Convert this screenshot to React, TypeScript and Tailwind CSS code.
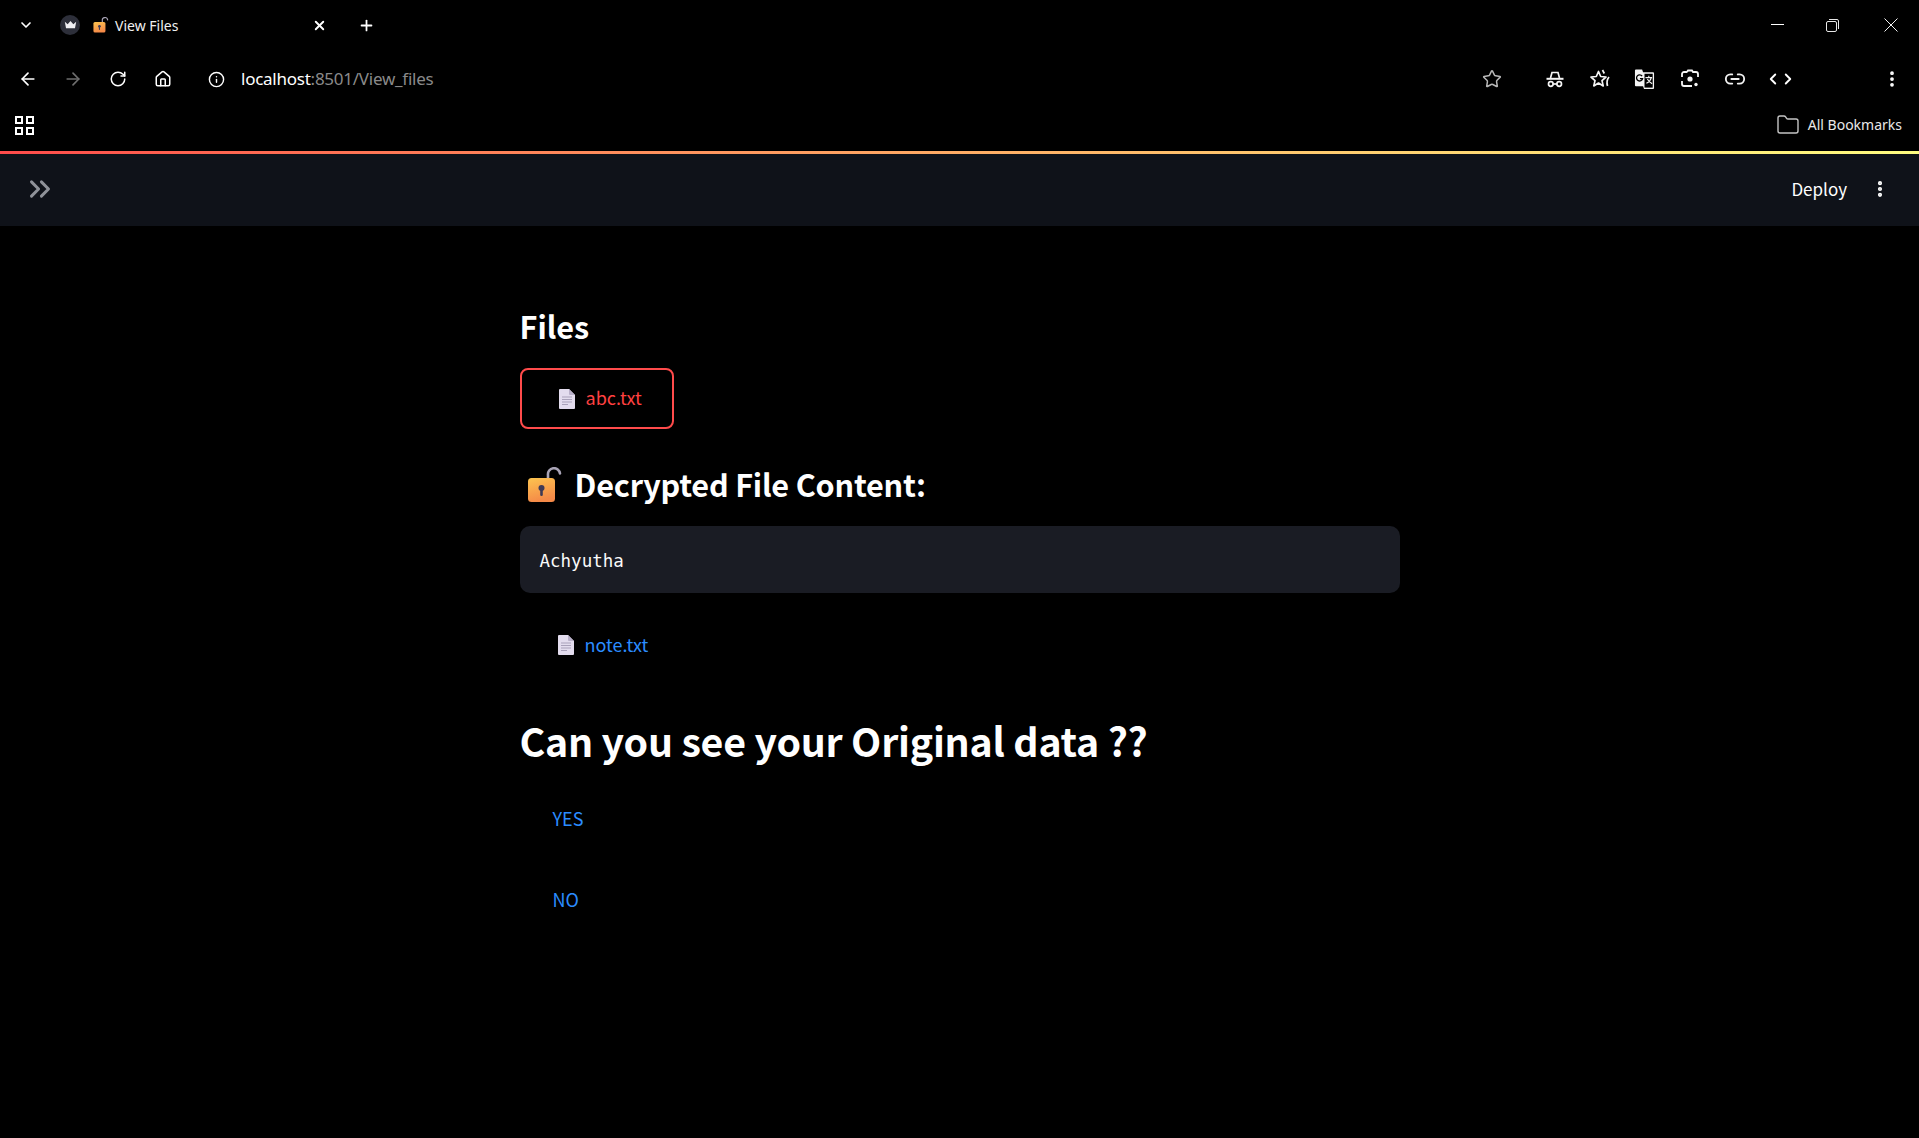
import {
  ArrowLeft,
  ArrowRight,
  ChevronDown,
  ChevronLeft,
  ChevronRight,
  ChevronsRight,
  EllipsisVertical,
  Folder,
  Home,
  Info,
  Link2,
  Plus,
  RotateCw,
  Star,
  X,
} from "lucide-react";
import type { ReactNode } from "react";

function LockEmoji({ className, id }: { className: string; id: string }) {
  return (
    <svg viewBox="0 0 36 36" className={className}>
      <defs>
        <linearGradient id={id} x1="0" y1="0" x2="0.3" y2="1">
          <stop offset="0" stopColor="#fcc44f" />
          <stop offset="1" stopColor="#f58a48" />
        </linearGradient>
      </defs>
      <path d="M21 12V8a6 6 0 0 1 12-1.500" fill="none" stroke="#a8a3b5" strokeWidth="2.600" strokeLinecap="round" />
      <rect x="1" y="11" width="27" height="24" rx="3.500" fill={`url(#${id})`} />
      <circle cx="14.500" cy="21" r="3" fill="#3f3a55" />
      <rect x="13.200" y="21" width="2.600" height="8" rx="1.200" fill="#3f3a55" />
    </svg>
  );
}

function DocEmoji() {
  return (
    <svg viewBox="0 0 16 20" className="w-[16px] h-[20px] shrink-0">
      <path d="M0 1a1 1 0 0 1 1-1h9l6 6v13a1 1 0 0 1-1 1H1a1 1 0 0 1-1-1z" fill="#e3dcee" />
      <path d="M10 0l6 6h-5a1 1 0 0 1-1-1z" fill="#b9b0c9" />
      <path d="M3 8h10M3 10.5h10M3 13h10M3 15.5h6" stroke="#a9a1ba" strokeWidth="1" />
    </svg>
  );
}

function Crown() {
  return (
    <div className="w-[20px] h-[20px] rounded-full bg-[#2d2f3a] flex items-center justify-center">
      <svg viewBox="0 0 16 12" className="w-[13px] h-[10px]">
        <path d="M1 2l3.5 3L8 1l3.5 4L15 2l-1.5 8h-11z" fill="#f0f0f4" />
      </svg>
    </div>
  );
}

function Slot({ children, className = "w-[45px]" }: { children: ReactNode; className?: string }) {
  return <div className={`${className} flex items-center justify-center shrink-0`}>{children}</div>;
}

function IncognitoIcon() {
  return (
    <svg viewBox="0 0 20 20" className="w-[20px] h-[20px]" fill="none" stroke="#f5f5f5" strokeWidth="1.700">
      <path d="M5.500 9L7 3.500h6L14.500 9" />
      <path d="M1.500 9.800h17" strokeWidth="2" />
      <circle cx="5.800" cy="15" r="2.300" />
      <circle cx="14.200" cy="15" r="2.300" />
      <path d="M8.100 15h3.800" />
    </svg>
  );
}

function SparkStarIcon() {
  return (
    <svg viewBox="0 0 22 20" className="w-[22px] h-[20px]" fill="none" stroke="#f5f5f5" strokeWidth="1.700" strokeLinejoin="round">
      <path d="M9.500 2.500l2.200 5 5.300.5-4 3.600 1.200 5.300-4.700-2.800-4.700 2.800 1.200-5.300-4-3.600 5.300-.5z" />
      <path d="M13.500 1l1.800 3.500M20 8c-2 2.500-2.500 5.500-1.500 9" />
    </svg>
  );
}

function TranslateIcon() {
  return (
    <svg viewBox="0 0 22 22" className="w-[21px] h-[21px]">
      <path d="M1 1.500a1 1 0 0 1 1-1h6.500l1 3H20a1 1 0 0 1 1 1v15.500a1 1 0 0 1-1 1H10.500l-1-3H2a1 1 0 0 1-1-1z" fill="#f5f5f5" />
      <rect x="11" y="5" width="8.600" height="14.500" fill="#000" />
      <path d="M8.500 7.500a3.200 3.200 0 1 0 .5 2.500H6.200" fill="none" stroke="#000" strokeWidth="1.400" />
      <path d="M12 9h7M15.500 7v2M13 15c3-1.500 4.500-3.500 5-6M14 10.500c1 2 2.500 3.500 5 5" stroke="#f5f5f5" strokeWidth="1.200" fill="none" />
    </svg>
  );
}

function LensIcon() {
  return (
    <svg viewBox="0 0 20 20" className="w-[20px] h-[20px]" fill="none" stroke="#f5f5f5" strokeWidth="1.800">
      <path d="M7 3l1-1.500h4L13 3h3a2 2 0 0 1 2 2v3M2 8V5a2 2 0 0 1 2-2h3M2 12v3a2 2 0 0 0 2 2h8" />
      <circle cx="10" cy="10" r="2.600" fill="#f5f5f5" stroke="none" />
      <circle cx="16" cy="15.500" r="1.700" fill="#f5f5f5" stroke="none" />
    </svg>
  );
}

function WindowControls() {
  return (
    <div className="ml-auto flex items-center pr-[21px]">
      <div className="w-[13px] h-px bg-white -mt-[2px]" />
      <svg viewBox="0 0 13 13" className="ml-[42px] w-[13px] h-[13px]" fill="none" stroke="#e8e8e8">
        <rect x="0.5" y="2.5" width="10" height="10" rx="1.500" />
        <path d="M3 .5h8a1.500 1.500 0 0 1 1.500 1.500v8" />
      </svg>
      <svg viewBox="0 0 14 14" className="ml-[45px] w-[14px] h-[14px]" stroke="#f2f2f2">
        <path d="M.5.5l13 13M13.500.5l-13 13" />
      </svg>
    </div>
  );
}

function TabBar() {
  return (
    <div className="h-[52px] pb-[2px] flex items-center">
      <ChevronDown className="w-[16px] h-[16px] ml-[18px] text-white" strokeWidth={2.5} />
      <div className="ml-[26px]">
        <Crown />
      </div>
      <div className="ml-[13px] w-[219px] flex items-center">
        <LockEmoji id="tab-lock" className="w-[16px] h-[16px]" />
        <span className="ml-[6px] text-[14px] text-[#f0f0f0] font-['Noto_Sans',sans-serif]">View Files</span>
      </div>
      <X className="w-[15px] h-[15px] text-white" strokeWidth={3} />
      <Plus className="ml-[31px] w-[17px] h-[17px] text-white" strokeWidth={2.5} />
      <WindowControls />
    </div>
  );
}

function ToolBar() {
  return (
    <div className="h-[54px] flex items-center pl-[5px]">
      <Slot><ArrowLeft className="w-[20px] h-[20px] text-white" strokeWidth={2} /></Slot>
      <Slot><ArrowRight className="w-[20px] h-[20px] text-[#6e6e6e]" strokeWidth={2} /></Slot>
      <Slot><RotateCw className="w-[18px] h-[18px] text-white" strokeWidth={2} /></Slot>
      <Slot><Home className="w-[18px] h-[18px] text-white" strokeWidth={2} /></Slot>
      <div className="w-[9px]" />
      <Slot><Info className="w-[17px] h-[17px] text-white" strokeWidth={2} /></Slot>
      <span className="ml-[2px] text-[17px] tracking-[-0.25px] font-['Noto_Sans',sans-serif] text-white">
        localhost<span className="text-[#8a8a8a]">:8501/View_files</span>
      </span>
      <div className="ml-auto flex items-center pr-[5px]">
        <Slot className="w-[45px] mr-[18px]"><Star className="w-[20px] h-[20px] text-[#b8b8b8]" strokeWidth={1.8} /></Slot>
        <Slot><IncognitoIcon /></Slot>
        <Slot><SparkStarIcon /></Slot>
        <Slot><TranslateIcon /></Slot>
        <Slot><LensIcon /></Slot>
        <Slot><Link2 className="w-[22px] h-[22px] text-[#f2f2f2]" strokeWidth={2} /></Slot>
        <Slot>
          <span className="flex -space-x-[3px] ml-[2px]">
            <ChevronLeft className="w-[18px] h-[20px] text-white" strokeWidth={2.5} />
            <ChevronRight className="w-[18px] h-[20px] text-white" strokeWidth={2.5} />
          </span>
        </Slot>
        <div className="w-[67px]" />
        <Slot><EllipsisVertical className="w-[20px] h-[20px] text-white" strokeWidth={2.5} /></Slot>
      </div>
    </div>
  );
}

function BookmarksBar() {
  return (
    <div className="h-[45px] pb-[7px] flex items-center pl-[15px] pr-[17px]">
      <div className="w-[19px] h-[19px] grid grid-cols-2 gap-[3px]">
        <div className="border-2 border-white" />
        <div className="border-2 border-white" />
        <div className="border-2 border-white" />
        <div className="border-2 border-white" />
      </div>
      <Folder className="ml-auto w-[24px] h-[24px] text-[#c4c4c4]" strokeWidth={1.4} />
      <span className="ml-[8px] -mt-[2px] text-[14px] text-[#e8e8e8] font-['Noto_Sans',sans-serif]">All Bookmarks</span>
    </div>
  );
}

function StreamlitHeader() {
  return (
    <div>
      <div className="h-[3px] bg-gradient-to-r from-[#ff4b4b] to-[#fffd80]" />
      <div className="h-[72px] bg-[#0f1219] flex items-center pl-[23px] pr-[29px]">
        <ChevronsRight className="w-[34px] h-[34px] -mt-[2px] text-[#8f9299]" strokeWidth={2.1} />
        <span className="ml-auto -mt-[2px] text-[17px] text-white">Deploy</span>
        <EllipsisVertical className="ml-[23px] -mt-[2px] w-[20px] h-[20px] text-white" strokeWidth={3} />
      </div>
    </div>
  );
}

function Content() {
  return (
    <div className="w-[880px] mx-auto pt-[78px] flex flex-col items-start text-white">
      <h2 className="text-[30.6px] leading-[48px] font-semibold -mt-[2px] mb-[2px]">Files</h2>
      <button className="mt-[16px] w-[154px] h-[61px] rounded-[8px] border-2 border-[#ff4b4b] flex items-center pl-[37px] gap-[11px] text-[#ff4040] text-[18px]">
        <DocEmoji />
        <span className="-mt-[2px]">abc.txt</span>
      </button>
      <h3 className="mt-[29px] pl-[7px] h-[56px] flex items-center gap-[12px] text-[30.6px] font-semibold tracking-[-0.2px]">
        <LockEmoji id="heading-lock" className="w-[36px] h-[36px] -mt-[2px]" />
        <span className="-mt-[2px]">Decrypted File Content:</span>
      </h3>
      <div className="mt-[12px] w-full h-[67px] rounded-[10px] bg-[#1a1c24] flex items-center pl-[20px] pt-[3px] text-[17.5px] text-[#fafafa] font-['DejaVu_Sans_Mono',monospace]">
        Achyutha
      </div>
      <div className="mt-[36px] h-[32px] pl-[38px] flex items-center gap-[11px] text-[18px] text-[#2b8cff]">
        <DocEmoji />
        <span className="-mt-[2px]">note.txt</span>
      </div>
      <h1 className="mt-[47px] mb-[2px] text-[39.3px] leading-[64px] font-semibold tracking-[-0.25px]">Can you see your Original data ??</h1>
      <div className="mt-[29px] pl-[33px] h-[32px] flex items-center text-[18px] text-[#2b8cff]">
        <span className="-mt-[1px]">YES</span>
      </div>
      <div className="mt-[49px] pl-[33px] h-[32px] flex items-center text-[18px] text-[#2b8cff]">
        <span className="-mt-[1px]">NO</span>
      </div>
    </div>
  );
}

export default function App() {
  return (
    <div className="h-[1138px] overflow-hidden bg-black font-['Noto_Sans_CJK_SC',sans-serif]">
      <TabBar />
      <ToolBar />
      <BookmarksBar />
      <StreamlitHeader />
      <Content />
    </div>
  );
}
